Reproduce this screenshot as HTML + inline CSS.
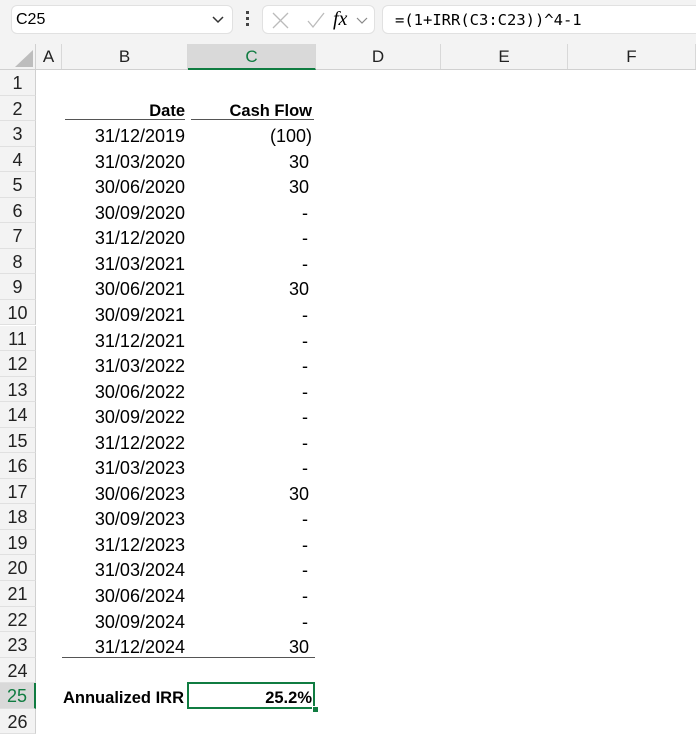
<!DOCTYPE html>
<html><head><style>
body{margin:0;width:696px;height:736px;background:#fff;font-family:"Liberation Sans",Arial,sans-serif;position:relative;overflow:hidden}
.tb{position:absolute;left:0;top:0;width:696px;height:44px;background:#f3f3f3}
.box{position:absolute;top:5px;height:29px;background:#fff;border:1px solid #e1e1e1;border-radius:6px;box-sizing:border-box}
.hdr{position:absolute;left:0;top:44px;width:696px;height:26px;background:#f3f3f3;border-bottom:1px solid #d0d0d0;box-sizing:border-box}
.ch{position:absolute;top:44px;height:25px;line-height:26px;text-align:center;font-size:17px;color:#222;border-right:1px solid #d8d8d8;box-sizing:border-box}
.rh{position:absolute;left:0;width:36px;background:#f3f3f3;border-bottom:1px solid #e0e0e0;border-right:1px solid #d0d0d0;box-sizing:border-box;text-align:center;font-size:18px;color:#222}
.c{position:absolute;font-size:18px;color:#000;text-align:right}
.b{font-size:16.5px;font-weight:bold}
</style></head><body>
<div class="tb"></div>
<div class="box" style="left:11px;width:222px"><span style="position:absolute;left:4px;top:5px;font-size:16px">C25</span>
<svg style="position:absolute;right:8px;top:10px" width="12" height="8"><path d="M1 1l5 5 5-5" fill="none" stroke="#333" stroke-width="1.5"/></svg></div>
<div style="position:absolute;left:246px;top:11px;width:3px;height:3px;background:#444;box-shadow:0 6px #444,0 12px #444"></div>
<div class="box" style="left:262px;width:113px">
<svg style="position:absolute;left:8px;top:6px" width="60" height="17"><path d="M2 1l15 15M17 1L2 16" stroke="#bbb" stroke-width="1.3"/><path d="M37 9l5 6 11-14" fill="none" stroke="#bbb" stroke-width="1.3"/></svg>
<span style="position:absolute;left:70px;top:2px;font-family:'Liberation Serif',serif;font-style:italic;font-size:20px">fx</span>
<svg style="position:absolute;left:93px;top:11px" width="12" height="8"><path d="M1 1l5 5 5-5" fill="none" stroke="#888" stroke-width="1.2"/></svg></div>
<div class="box" style="left:382px;width:320px"><span style="position:absolute;left:12px;top:5px;font-family:'DejaVu Sans Mono','Liberation Mono',monospace;font-size:15.5px">=(1+IRR(C3:C23))^4-1</span></div>
<div class="hdr"></div>
<svg style="position:absolute;left:14px;top:50px" width="20" height="18"><path d="M19 0V17H1z" fill="#bdbdbd"/></svg>
<div class="ch" style="left:0;width:36px;border-right:1px solid #d0d0d0"></div>
<div class="ch" style="left:36px;width:26px">A</div>
<div class="ch" style="left:62px;width:126px">B</div>
<div class="ch" style="left:188px;width:128px;background:#d9d9d9;color:#107c41;border-bottom:2px solid #107c41;height:26px">C</div>
<div class="ch" style="left:316px;width:125px">D</div>
<div class="ch" style="left:441px;width:127px">E</div>
<div class="ch" style="left:568px;width:128px">F</div>
<div id="rows"></div>
<script>
var d=["31/12/2019","31/03/2020","30/06/2020","30/09/2020","31/12/2020","31/03/2021","30/06/2021","30/09/2021","31/12/2021","31/03/2022","30/06/2022","30/09/2022","31/12/2022","31/03/2023","30/06/2023","30/09/2023","31/12/2023","31/03/2024","30/06/2024","30/09/2024","31/12/2024"];
var v=["(100)","30","30","-","-","-","30","-","-","-","-","-","-","-","30","-","-","-","-","-","30"];
var h="",H=25.55;
for(var i=1;i<=26;i++){var t=70+(i-1)*H;
var s=i==25?"background:#d9d9d9;color:#107c41;border-right:2px solid #107c41;":"";
h+='<div class="rh" style="top:'+t+'px;height:'+H+'px;line-height:'+(H+1)+'px;'+s+'">'+i+'</div>';}
for(var j=0;j<21;j++){var t=70+(j+2)*H+5;
h+='<div class="c" style="left:62px;width:123px;top:'+t+'px">'+d[j]+'</div>';
h+='<div class="c" style="left:188px;width:'+(v[j]=="(100)"?124:(v[j]=="-"?120:121))+'px;top:'+t+'px">'+v[j]+'</div>';}
h+='<div class="c b" style="left:62px;width:123px;top:'+(70+H+6)+'px">Date</div>';
h+='<div class="c b" style="left:188px;width:124px;top:'+(70+H+6)+'px">Cash Flow</div>';
h+='<div style="position:absolute;left:65px;top:119px;width:120px;height:1px;background:#555"></div>';
h+='<div style="position:absolute;left:191px;top:119px;width:123px;height:1px;background:#555"></div>';
h+='<div style="position:absolute;left:62px;top:657px;width:253px;height:1px;background:#555"></div>';
h+='<div class="c b" style="left:62px;width:122px;top:'+(70+24*H+6)+'px">Annualized IRR</div>';
h+='<div style="position:absolute;left:187px;top:682px;width:128px;height:27px;border:2px solid #107c41;box-sizing:border-box"></div>';
h+='<div style="position:absolute;left:312px;top:706px;width:5px;height:5px;background:#107c41;border:1px solid #fff"></div>';
h+='<div class="c b" style="left:188px;width:124px;top:'+(70+24*H+6)+'px">25.2%</div>';
document.getElementById("rows").innerHTML=h;
</script>
</body></html>
